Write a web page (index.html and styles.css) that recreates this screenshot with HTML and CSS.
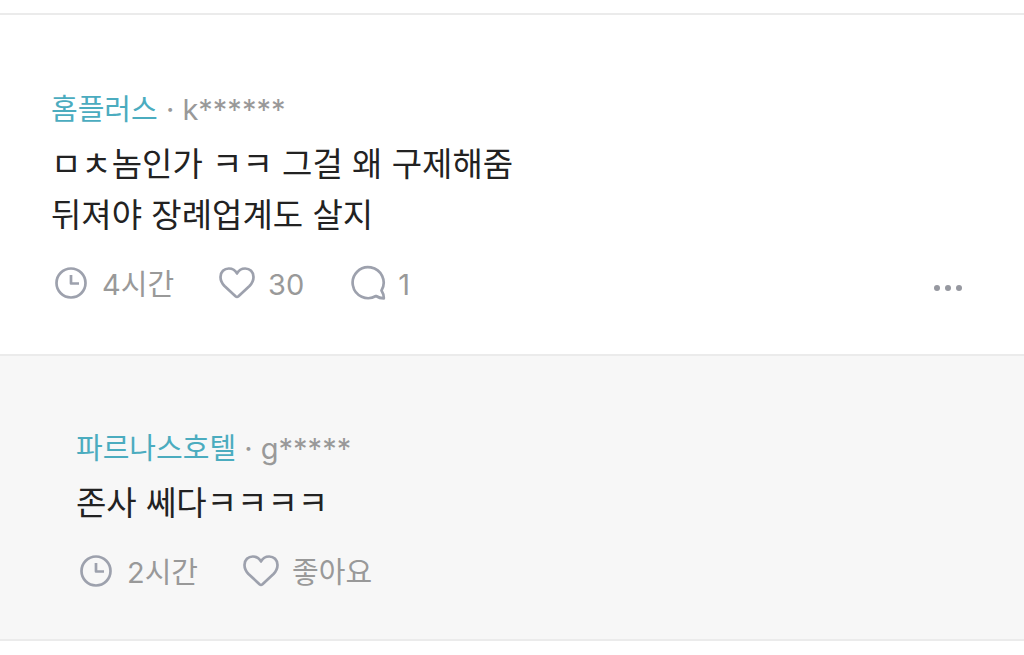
FILE: index.html
```html
<!DOCTYPE html>
<html lang="ko">
<head>
    <meta charset="UTF-8">
    <meta name="viewport" content="width=device-width, initial-scale=1">
    <title>댓글</title>
    <link rel="stylesheet" href="styles.css">
</head>
<body>
    <main class="comments">
        <article class="comment">
            <div class="writer"><a class="company" href="#">홈플러스</a> · k******</div>
            <p class="text">ㅁㅊ놈인가 ㅋㅋ 그걸 왜 구제해줌<br>뒤져야 장례업계도 살지</p>
            <div class="info">
                <span class="item time">
                    <svg class="icon" viewBox="0 0 40 40"><circle cx="20" cy="20" r="14.5"/><path d="M20 12v8.500h8"/></svg>
                    4시간
                </span>
                <button class="item like" type="button">
                    <svg class="icon" viewBox="0 0 40 40"><path d="M18.500 33.200L7.500 23C4.800 20.200 3.500 17.300 3.500 14C3.500 8.800 7.200 5.500 11.800 5.500C15.500 5.500 18.500 7.500 20 10.500C21.500 7.500 24.500 5.500 28.200 5.500C32.800 5.500 36.500 8.800 36.500 14C36.500 17.300 35.200 20.200 32.500 23L21.500 33.200Q20 34.500 18.500 33.200Z"/></svg>
                    30
                </button>
                <button class="item reply-count" type="button">
                    <svg class="icon" viewBox="0 0 40 40"><path d="M34.500 27.500A15.500 15.500 0 1 0 29 33C31 34.300 33.500 35.300 36.800 35.300C37 32 36 30 34.500 27.500Z"/></svg>
                    1
                </button>
                <button class="more" type="button" aria-label="더보기">
                    <svg viewBox="0 0 30 8"><circle cx="4" cy="4" r="3"/><circle cx="15" cy="4" r="3"/><circle cx="26" cy="4" r="3"/></svg>
                </button>
            </div>
        </article>

        <article class="comment reply">
            <div class="writer"><a class="company" href="#">파르나스호텔</a> · g*****</div>
            <p class="text">존사 쎄다ㅋㅋㅋㅋ</p>
            <div class="info">
                <span class="item time">
                    <svg class="icon" viewBox="0 0 40 40"><circle cx="20" cy="20" r="14.5"/><path d="M20 12v8.500h8"/></svg>
                    2시간
                </span>
                <button class="item like" type="button">
                    <svg class="icon" viewBox="0 0 40 40"><path d="M18.500 33.200L7.500 23C4.800 20.200 3.500 17.300 3.500 14C3.500 8.800 7.200 5.500 11.800 5.500C15.500 5.500 18.500 7.500 20 10.500C21.500 7.500 24.500 5.500 28.200 5.500C32.800 5.500 36.500 8.800 36.500 14C36.500 17.300 35.200 20.200 32.500 23L21.500 33.200Q20 34.500 18.500 33.200Z"/></svg>
                    좋아요
                </button>
            </div>
        </article>
    </main>
</body>
</html>
```
FILE: styles.css
```css
* {
    box-sizing: border-box;
}
body {
    margin: 0;
    background-color: #fff;
    font-family: Inter, "Noto Sans CJK KR", sans-serif;
    color: #222;
}
.comments {
    margin-top: 13px;
    border-bottom: 2px solid #ebebeb;
}
.comment {
    padding: 73px 53px 44px 51px;
    border-top: 2px solid #ebebeb;
}
.reply {
    padding: 71px 76px 41px;
    background-color: #f7f7f7;
}
.writer {
    font-size: 29px;
    line-height: 44px;
    color: #999;
}
.company {
    color: #4bacbf;
    text-decoration: none;
}
.text {
    margin: 7px 0 19px;
    font-size: 33px;
    line-height: 51px;
}
.info {
    display: flex;
    align-items: center;
    gap: 43px;
    height: 50px;
}
.item {
    display: flex;
    align-items: center;
    gap: 11px;
    font-size: 29px;
    line-height: 44px;
    color: #999;
}
button {
    padding: 0;
    border: none;
    background: none;
    font-family: inherit;
    cursor: pointer;
}
.icon {
    width: 40px;
    height: 40px;
    margin-bottom: 4px;
    fill: none;
    stroke: #9da1ad;
    stroke-width: 2.7;
    stroke-linejoin: round;
}
.more {
    display: flex;
    margin-left: auto;
    padding: 14px 8px 8px;
}
.more svg {
    width: 30px;
    height: 8px;
    fill: #9698a0;
}
```
